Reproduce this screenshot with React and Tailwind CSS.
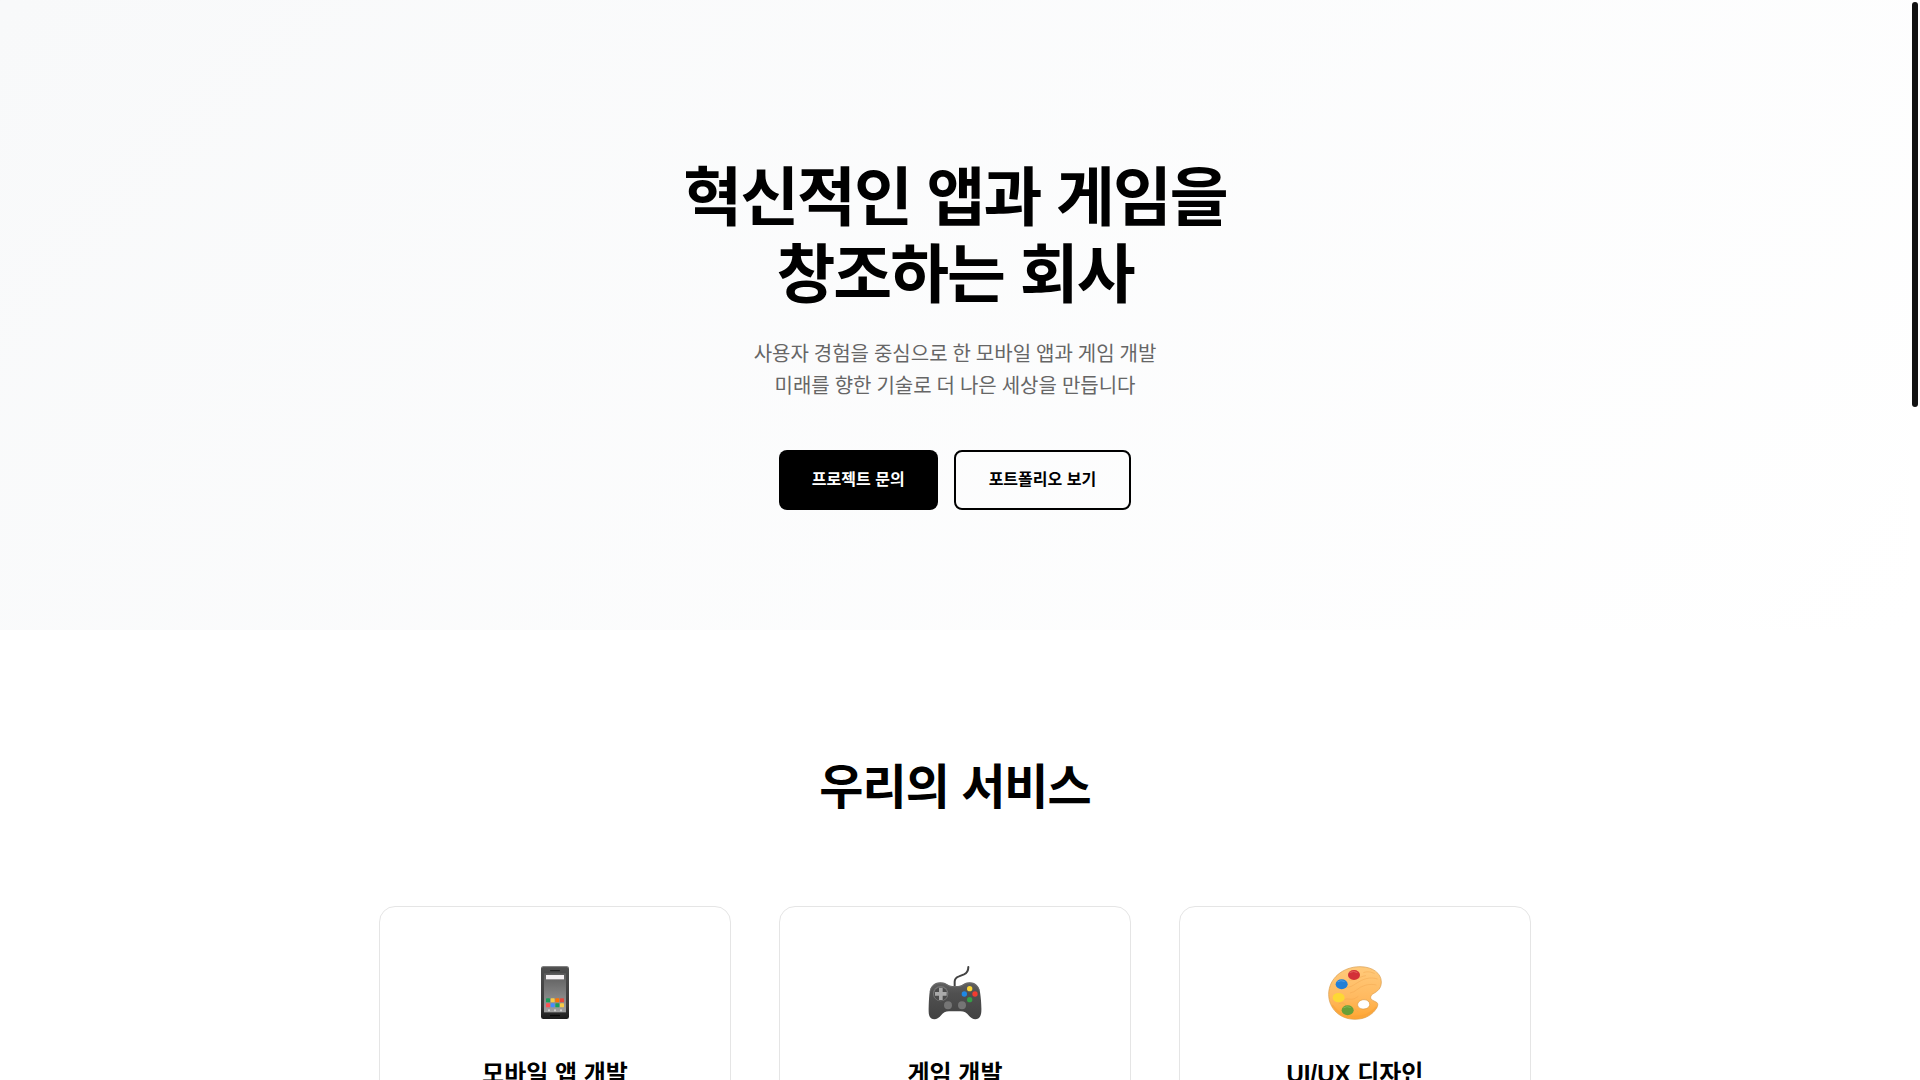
const PhoneIcon = () => (
  <svg viewBox="21 47 168 162" className="h-[54px] w-14" role="img" aria-label="스마트폰">
    <defs>
      <linearGradient id="phone-body" x1="0" y1="0" x2="0" y2="1">
        <stop offset="0" stopColor="#4f4f4f" />
        <stop offset="0.75" stopColor="#3a3a3a" />
        <stop offset="1" stopColor="#1b1b1b" />
      </linearGradient>
      <linearGradient id="phone-screen" x1="0" y1="0" x2="0" y2="1">
        <stop offset="0" stopColor="#5c5c5c" />
        <stop offset="1" stopColor="#a0a0a0" />
      </linearGradient>
    </defs>
    <rect x="63" y="48" width="84" height="158" rx="7" fill="url(#phone-body)" />
    <path d="M65 53q2-4 6-4h68q4 0 6 4" fill="none" stroke="#858585" strokeWidth="2" />
    <rect x="90" y="59" width="30" height="4" rx="2" fill="#222222" />
    <rect x="72" y="69" width="66" height="117" fill="url(#phone-screen)" />
    <rect x="78" y="74" width="54" height="13" fill="#f5f1f3" />
    <rect x="78" y="144" width="12" height="12" rx="2" fill="#189f5b" />
    <rect x="92" y="144" width="12" height="12" rx="2" fill="#f8cb46" />
    <rect x="106" y="144" width="12" height="12" rx="2" fill="#ff7200" />
    <rect x="120" y="144" width="12" height="12" rx="2" fill="#e3493c" />
    <rect x="78" y="159" width="12" height="12" rx="2" fill="#ff5252" />
    <rect x="92" y="159" width="12" height="12" rx="2" fill="#448aff" />
    <rect x="106" y="159" width="12" height="12" rx="2" fill="#189f5b" />
    <rect x="120" y="159" width="12" height="12" rx="2" fill="#f8cb46" />
    <rect x="84" y="177" width="6" height="6" rx="2" fill="#d0d0d0" />
    <rect x="102" y="177" width="6" height="6" rx="2" fill="#d0d0d0" />
    <rect x="120" y="177" width="6" height="6" rx="2" fill="#d0d0d0" />
    <rect x="90" y="193" width="30" height="5" rx="2" fill="#080808" />
  </svg>
);

const GamepadIcon = () => (
  <svg viewBox="81 47 168 162" className="h-[54px] w-14" role="img" aria-label="게임 컨트롤러">
    <defs>
      <linearGradient id="pad-body" x1="0" y1="0" x2="0" y2="1">
        <stop offset="0" stopColor="#616161" />
        <stop offset="0.3" stopColor="#505050" />
        <stop offset="1" stopColor="#424242" />
      </linearGradient>
    </defs>
    <path d="M164 110V94c0-8 4-13 13-16l15-6c9-4 13-9 13-22" fill="none" stroke="#424242" strokeWidth="6" strokeLinecap="round" />
    <path
      d="M121 96c10 0 15 2 21 6 5 4 9 5 15 5h17c6 0 10-1 15-5 6-4 11-6 20-6 16 0 27 10 30 24 3 14 6 45 5 64-1 15-8 23-18 23-8 0-14-5-19-11-7-9-15-13-25-13h-35c-10 0-18 4-25 13-5 6-11 11-19 11-10 0-17-8-17-23 0-19 1-50 4-64 3-14 15-24 31-24Z"
      fill="url(#pad-body)"
    />
    <path d="M90 124c3-15 14-26 31-26 10 0 15 2 20 6 5 3 10 5 16 5h17c6 0 11-2 16-5 5-4 10-6 19-6 15 0 26 10 29 23" fill="none" stroke="#777777" strokeWidth="2" />
    <circle cx="122" cy="130" r="23" fill="#757575" />
    <circle cx="122" cy="131" r="20" fill="#4b4b4b" />
    <path d="M117 112h11v13h12v11h-12v13h-11v-13h-12v-11h12Z" fill="#aaaaaa" />
    <circle cx="144" cy="165" r="12" fill="#757575" />
    <circle cx="186" cy="165" r="12" fill="#757575" />
    <circle cx="209" cy="115" r="8" fill="#fdd835" />
    <circle cx="193" cy="131" r="8" fill="#1e88e5" />
    <circle cx="225" cy="131" r="8" fill="#f43b30" />
    <circle cx="209" cy="148" r="8" fill="#35a047" />
  </svg>
);

const PaletteIcon = () => (
  <svg viewBox="81 47 168 162" className="h-[54px] w-14" role="img" aria-label="팔레트">
    <defs>
      <linearGradient id="palette-body" x1="0" y1="0" x2="0" y2="1">
        <stop offset="0" stopColor="#ffca7b" />
        <stop offset="0.6" stopColor="#ffb95f" />
        <stop offset="1" stopColor="#ffa52f" />
      </linearGradient>
    </defs>
    <path
      fillRule="evenodd"
      d="M180 49c38 0 64 20 64 46 0 20-12 28-24 35-9 5-10 13-5 18 4 4 10 4 15 8 5 4 4 10 0 17-12 20-35 34-65 34-45 0-79-32-79-75 0-48 43-83 94-83ZM192 148c-10 0-19 7-19 15s8 13 18 13 18-6 18-14-7-14-17-14Z"
      fill="url(#palette-body)"
      stroke="#d89a48"
      strokeWidth="2"
    />
    <path d="M97 165c19 24 34 35 68 34 30 0 51-12 65-30" fill="none" stroke="#f7a23b" strokeWidth="5" opacity="0.6" />
    <path
      d="M140 112c20-3 29-15 45-22 19-9 34-8 48-4M150 128c17-2 25-18 45-23 13-4 25-3 34-1M147 89c19 2 33-11 51-13M133 147c17-4 22 6 42-9M116 160c12-5 22 0 20 7M156 188c9-18 11-12 18-2M190 67c13-5 24-2 34 3"
      fill="none"
      stroke="#efa24c"
      strokeWidth="3"
      opacity="0.4"
    />
    <ellipse cx="162" cy="74" rx="18" ry="15" fill="#d32f37" />
    <ellipse cx="125" cy="102" rx="18" ry="15" fill="#237fd7" />
    <ellipse cx="116" cy="142" rx="18" ry="14" fill="#fdd835" />
    <ellipse cx="143" cy="180" rx="18" ry="15" fill="#689f38" />
    <path d="M150 66q11-6 21 0" fill="none" stroke="#e5605c" strokeWidth="3" strokeLinecap="round" />
    <path d="M113 94q10-6 20-1" fill="none" stroke="#4b9ce9" strokeWidth="3" strokeLinecap="round" />
    <path d="M131 172q10-6 20-1" fill="none" stroke="#82b755" strokeWidth="3" strokeLinecap="round" />
  </svg>
);

const services = [
  { Icon: PhoneIcon, title: "모바일 앱 개발" },
  { Icon: GamepadIcon, title: "게임 개발" },
  { Icon: PaletteIcon, title: "UI/UX 디자인" },
];

const ServiceCard = ({ Icon, title }) => (
  <article className="rounded-2xl border border-[#e5e5e5] bg-white px-8 py-12 text-center">
    <div className="mb-6 flex h-[76px] items-center justify-center">
      <Icon />
    </div>
    <h3 className="text-2xl leading-[38px] font-semibold">{title}</h3>
  </article>
);

const App = () => {
  return (
    <div className="flex h-screen overflow-hidden bg-white font-['Liberation_Sans','Noto_Sans_CJK_KR',sans-serif] text-black">
      <main className="min-w-0 flex-1">
        <section className="bg-linear-135 from-[#f8f9fa] to-white px-5 pt-40 pb-[120px] text-center">
          <h1 className="mb-6 text-[64px] leading-[77px] font-bold tracking-[-2px]">
            혁신적인 앱과 게임을
            <br />
            창조하는 회사
          </h1>
          <p className="mb-12 font-['Roboto','Noto_Sans_CJK_KR',sans-serif] text-xl leading-8 text-[#666666]">
            사용자 경험을 중심으로 한 모바일 앱과 게임 개발
            <br />
            미래를 향한 기술로 더 나은 세상을 만듭니다
          </p>
          <div className="flex justify-center gap-4">
            <button className="rounded-lg bg-black px-[33px] py-4 text-base font-semibold text-white">
              프로젝트 문의
            </button>
            <button className="rounded-lg border-2 border-black px-[33px] py-4 text-base font-semibold">
              포트폴리오 보기
            </button>
          </div>
        </section>

        <section className="px-5 py-[120px]">
          <h2 className="mb-20 text-center text-5xl leading-[76px] font-bold tracking-[-1px]">
            우리의 서비스
          </h2>
          <div className="mx-auto grid max-w-[1152px] grid-cols-3 gap-12">
            {services.map((service) => (
              <ServiceCard key={service.title} {...service} />
            ))}
          </div>
        </section>
      </main>

      {/* scrollbar */}
      <div className="w-2.5 shrink-0 bg-white p-0.5">
        <div className="h-[405px] rounded-full bg-[#111111]" />
      </div>
    </div>
  );
};

export default App;
